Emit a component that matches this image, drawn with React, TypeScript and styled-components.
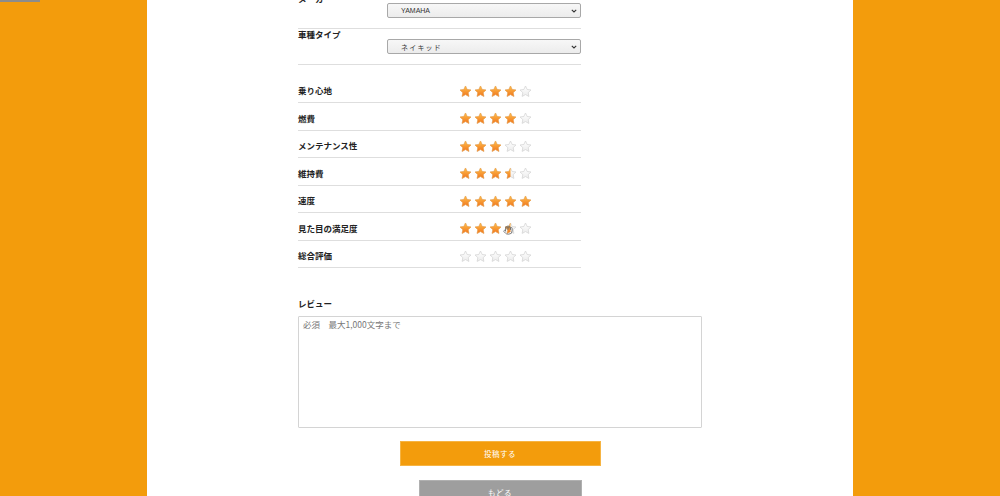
import React, { useId } from "react";
import styled, { createGlobalStyle } from "styled-components";
import { Hand } from "lucide-react";

const Global = createGlobalStyle`
  html, body { margin: 0; padding: 0; background: #f39c0c; }
  body { font-family: "Noto Sans CJK JP", "Noto Sans", sans-serif; overflow: hidden; }
  * { box-sizing: border-box; }
`;

const Page = styled.div`
  width: 1000px;
  height: 496px;
  background: #f39c0c;
  display: flex;
  justify-content: center;
  overflow: hidden;
  position: relative;
`;

const Progress = styled.div`
  position: absolute;
  top: 0;
  left: 0;
  width: 40px;
  height: 2px;
  background: #8c8c8c;
`;

const Panel = styled.main`
  width: 706px;
  background: #fff;
  padding: 0 151px;
  display: flex;
  flex-direction: column;
`;

const Form = styled.form`
  margin-top: -7px;
  display: flex;
  flex-direction: column;
`;

const Fields = styled.div`
  width: 283px;
  display: flex;
  flex-direction: column;
`;

const Field = styled.div`
  display: flex;
  flex-direction: column;
  padding-bottom: 10px;
  border-bottom: 1px solid #dedede;
`;

const Label = styled.div`
  font-size: 8.5px;
  line-height: 10px;
  font-weight: 700;
  color: #222;
`;

const FakeSelect = styled.div`
  margin-left: 89px;
  width: 194px;
  height: 15px;
  border: 1px solid #a8a8a8;
  border-radius: 2px;
  background: linear-gradient(#f7f7f7, #ececec);
  display: flex;
  align-items: center;
  justify-content: space-between;
  padding: 0 3px 0 13px;
  font-size: 7px;
  color: #333;
`;

const SelectText = styled.span<{ $jp?: boolean }>`
  font-family: ${(p) => (p.$jp ? '"Noto Sans CJK JP", sans-serif' : '"Liberation Sans", Arial, sans-serif')};
  letter-spacing: ${(p) => (p.$jp ? "1.2px" : "0")};
`;

const Ratings = styled.div`
  margin-top: 10.5px;
  width: 283px;
  display: flex;
  flex-direction: column;
`;

const Row = styled.div`
  display: grid;
  grid-template-columns: 162px 1fr;
  align-items: center;
  height: 27.5px;
  padding-top: 3px;
  border-bottom: 1px solid #dedede;
`;

const Stars = styled.div`
  position: relative;
  display: flex;
  gap: 2px;
  align-items: center;
  margin-top: 2px;
  margin-left: -1px;
`;

const Cursor = styled.div`
  position: absolute;
  left: 44px;
  top: 3px;
  width: 10px;
  height: 10px;
  color: #6a6a6a;
  display: flex;
`;

const ReviewLabel = styled(Label)`
  margin-top: 30px;
`;

const TextArea = styled.textarea`
  margin-top: 8px;
  width: 404px;
  height: 112px;
  border: 1px solid #d4d4d4;
  border-radius: 1px;
  padding: 2px 4px;
  font-family: "Noto Sans CJK JP", sans-serif;
  font-size: 8.5px;
  line-height: 1.3;
  resize: none;
  outline: none;
  &::placeholder { color: #777; }
`;

const Button = styled.button<{ $variant: "primary" | "back" }>`
  align-self: center;
  margin-top: ${(p) => (p.$variant === "primary" ? "13px" : "14px")};
  width: ${(p) => (p.$variant === "primary" ? "201px" : "163px")};
  height: 25px;
  border: 1px solid ${(p) => (p.$variant === "primary" ? "#f6b443" : "#b0b0b0")};
  background: ${(p) => (p.$variant === "primary" ? "#f39c0c" : "#9e9e9e")};
  color: #fff;
  font-family: "Noto Sans CJK JP", sans-serif;
  font-size: 7.5px;
  letter-spacing: 0.5px;
  padding: 0;
  cursor: pointer;
`;

const STAR = "M12 1.8l3.05 6.45 7.05.95-5.15 4.9 1.3 7L12 17.7l-6.25 3.4 1.3-7L1.9 9.2l7.05-.95z";

function Star({ value }: { value: number }) {
  const id = useId().replace(/:/g, "");
  return (
    <svg width="13" height="13" viewBox="0 0 24 24">
      <defs>
        <linearGradient id={`o${id}`} x1="0" y1="0" x2="0" y2="1">
          <stop offset="0" stopColor="#ffc24e" />
          <stop offset="1" stopColor="#f0741c" />
        </linearGradient>
        <linearGradient id={`e${id}`} x1="0" y1="0" x2="0" y2="1">
          <stop offset="0" stopColor="#ffffff" />
          <stop offset="1" stopColor="#ececec" />
        </linearGradient>
        <clipPath id={`c${id}`}>
          <rect x="0" y="0" width={24 * value} height="24" />
        </clipPath>
      </defs>
      <path d={STAR} fill={`url(#e${id})`} stroke="#d2d2d2" strokeWidth="1.3" strokeLinejoin="round" />
      {value > 0 && (
        <path
          d={STAR}
          fill={`url(#o${id})`}
          stroke="#f09a3a"
          strokeWidth="1"
          strokeLinejoin="round"
          clipPath={`url(#c${id})`}
        />
      )}
    </svg>
  );
}

function Rating({ score, cursor }: { score: number; cursor?: boolean }) {
  return (
    <Stars>
      {[0, 1, 2, 3, 4].map((i) => (
        <Star key={i} value={Math.max(0, Math.min(1, score - i))} />
      ))}
      {cursor && (
        <Cursor>
          <Hand size={10} strokeWidth={2} />
        </Cursor>
      )}
    </Stars>
  );
}

function Chevron() {
  return (
    <svg width="6" height="4" viewBox="0 0 6 4">
      <path d="M0.8 0.8L3 3L5.2 0.8" fill="none" stroke="#333" strokeWidth="1.1" />
    </svg>
  );
}

const rows: { label: string; score: number; cursor?: boolean }[] = [
  { label: "乗り心地", score: 4 },
  { label: "燃費", score: 4 },
  { label: "メンテナンス性", score: 3 },
  { label: "維持費", score: 3.5 },
  { label: "速度", score: 5 },
  { label: "見た目の満足度", score: 3.5, cursor: true },
  { label: "総合評価", score: 0 },
];

export default function App() {
  return (
    <Page>
      <Global />
      <Progress />
      <Panel>
        <Form onSubmit={(e) => e.preventDefault()}>
          <Fields>
            <Field>
              <Label>メーカー</Label>
              <FakeSelect>
                <SelectText>YAMAHA</SelectText>
                <Chevron />
              </FakeSelect>
            </Field>
            <Field>
              <Label>車種タイプ</Label>
              <FakeSelect>
                <SelectText $jp>ネイキッド</SelectText>
                <Chevron />
              </FakeSelect>
            </Field>
          </Fields>
          <Ratings>
            {rows.map((r) => (
              <Row key={r.label}>
                <Label>{r.label}</Label>
                <Rating score={r.score} cursor={r.cursor} />
              </Row>
            ))}
          </Ratings>
          <ReviewLabel>レビュー</ReviewLabel>
          <TextArea placeholder="必須　最大1,000文字まで" />
          <Button type="submit" $variant="primary">投稿する</Button>
          <Button type="button" $variant="back">もどる</Button>
        </Form>
      </Panel>
    </Page>
  );
}
